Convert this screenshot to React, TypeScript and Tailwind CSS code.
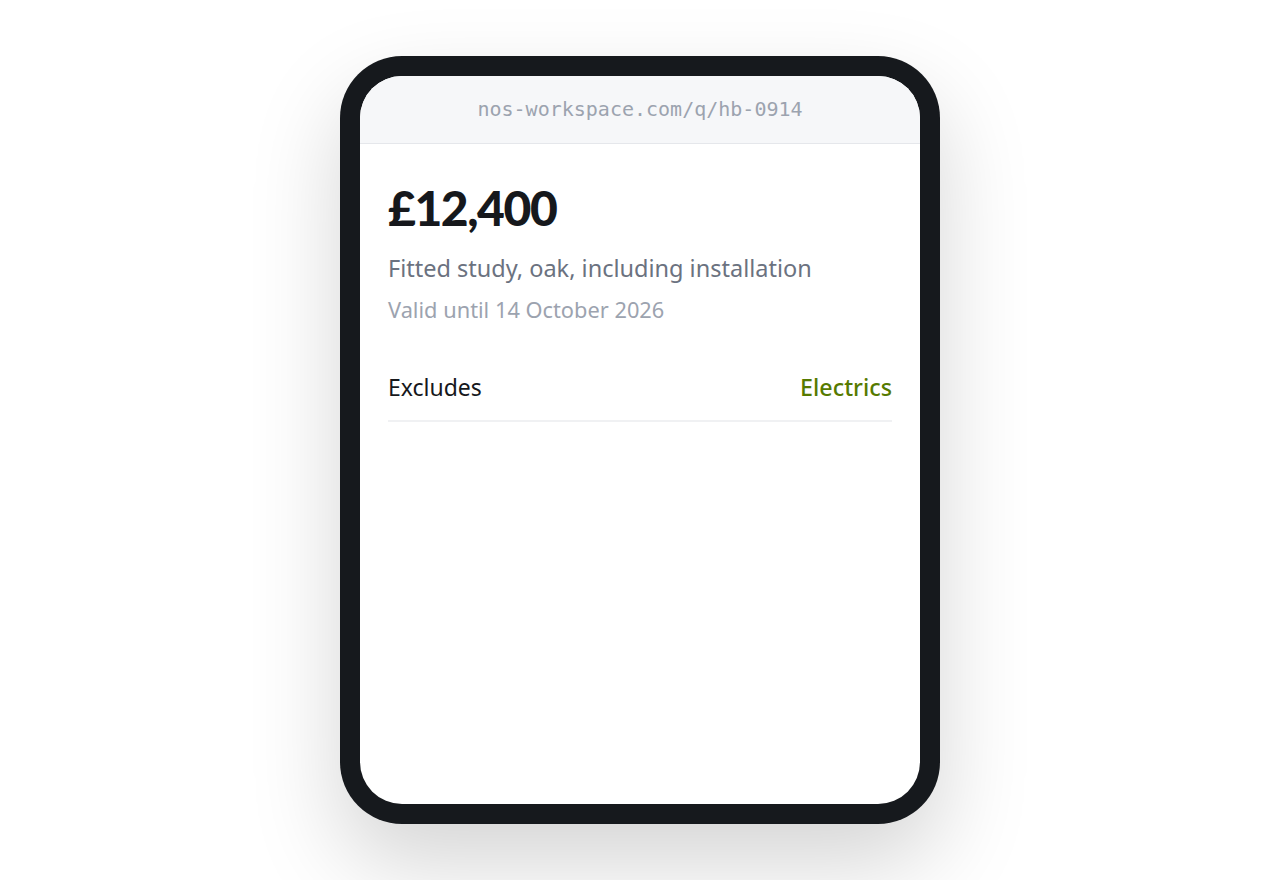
export default function App() {
  return (
    <div className="flex min-h-[880px] w-full items-start justify-center bg-white pt-[56px] font-['Noto_Sans',sans-serif]">
      <div className="h-[768px] w-[600px] rounded-[62px] bg-[#16191d] p-[20px] shadow-[0_40px_90px_rgba(0,0,0,0.17)]">
        <div className="flex h-full flex-col overflow-hidden rounded-[42px] bg-white">
          <div className="flex h-[68px] items-center justify-center border-b border-[#e5e7eb] bg-[#f6f7f9] pb-[2px]">
            <span className="font-['DejaVu_Sans_Mono','Liberation_Mono',monospace] text-[20px] text-[#9ca3af]">
              nos-workspace.com/q/hb-0914
            </span>
          </div>
          <div className="px-[28px] pt-[36px]">
            <h1 className="font-['Lato',sans-serif] text-[48px] font-black leading-[56px] tracking-[-0.03em] text-[#16181c]">
              £12,400
            </h1>
            <p className="mt-[16px] text-[23.5px] leading-[32px] text-[#6b7280]">Fitted study, oak, including installation</p>
            <p className="mt-[11px] text-[21.8px] leading-[30px] text-[#9ca3af]">Valid until 14 October 2026</p>
            <div className="mt-[46px] flex items-center justify-between border-b-2 border-[#f0f1f3] pb-[17px]">
              <span className="text-[23px] leading-[32px] text-[#16181c]">Excludes</span>
              <span className="text-[23.3px] font-medium leading-[32px] text-[#567a00]">Electrics</span>
            </div>
          </div>
        </div>
      </div>
    </div>
  )
}
